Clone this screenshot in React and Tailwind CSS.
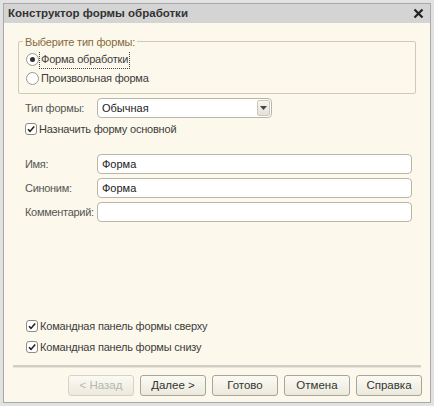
import React from "react";

const font = { fontFamily: '"Liberation Sans", Arial, sans-serif' };

function Check({ label }) {
  return (
    <div className="flex items-center gap-[2px] h-[18px]">
      <div className="w-[12px] h-[12px] border border-[#8c8c84] rounded-[3px] bg-white flex items-center justify-center">
        <svg width="10" height="10" viewBox="0 0 10 10">
          <path d="M2 5.2 L4 7.4 L8.2 2.4" fill="none" stroke="#222" strokeWidth="1.6" />
        </svg>
      </div>
      <span className="text-[11px] tracking-[-0.2px] text-[#3c3c3c]">{label}</span>
    </div>
  );
}

function Radio({ label, checked, focus }) {
  return (
    <div className="flex items-center gap-[1px] h-[19px]">
      <div className="w-[13px] h-[13px] rounded-full border border-[#9a9890] bg-white flex items-center justify-center">
        {checked && <div className="w-[5px] h-[5px] rounded-full bg-[#333]" />}
      </div>
      <span className={"text-[11px] tracking-[-0.2px] text-[#3c3c3c] px-[1px] " + (focus ? "outline outline-1 outline-dotted outline-[#444]" : "")}>{label}</span>
    </div>
  );
}

function Field({ label, value }) {
  return (
    <div className="flex items-center h-[24px]">
      <div className="w-[72px] text-[11px] tracking-[-0.3px] text-[#555]">{label}</div>
      <div className="flex-1 h-[20px] bg-white border border-[#b9b5a8] rounded-[4px] flex items-center px-[4px] text-[11px] text-[#222]">
        {value}
      </div>
    </div>
  );
}

function Btn({ children, disabled }) {
  return (
    <div
      className={
        "w-[66px] h-[21px] rounded-[3px] border flex items-center justify-center text-[11.5px] bg-[linear-gradient(#fbfaf4,#ece9dc)] " +
        (disabled ? "border-[#d6d3c6] text-[#b8b6ae]" : "border-[#a9a59a] text-[#333]")
      }
    >
      {children}
    </div>
  );
}

export default function App() {
  return (
    <div style={font} className="w-[434px] h-[406px] bg-[#e2e2e2] p-[3px]">
      <div className="w-full h-full flex flex-col border border-[#a8a8a8] bg-[#fcf9ec]">
        <div className="h-[19px] bg-[#d4d4d4] flex items-center justify-between pl-[4px] pr-[6px]">
          <span className="text-[11.5px] font-bold text-[#333]">Конструктор формы обработки</span>
          <svg width="11" height="11" viewBox="0 0 11 11">
            <path d="M1.5 1.5 L9.5 9.5 M9.5 1.5 L1.5 9.5" stroke="#222" strokeWidth="2.2" />
          </svg>
        </div>
        <div className="flex-1 flex flex-col px-[14px] pt-[18px]">
          <div className="relative border border-[#cfcab8] rounded-[2px] px-[7px] pt-[8px] pb-[5px] mb-[2px]">
            <span className="absolute -top-[8px] left-[4px] bg-[#fcf9ec] px-[2px] text-[11px] tracking-[-0.2px] text-[#86693c]">Выберите тип формы:</span>
            <Radio label="Форма обработки" checked focus />
            <Radio label="Произвольная форма" />
          </div>
          <div className="pl-[7px] pr-[4px]">
            <div className="flex items-center h-[24px]">
              <div className="w-[72px] text-[11px] tracking-[-0.2px] text-[#555]">Тип формы:</div>
              <div className="w-[175px] h-[20px] bg-white border border-[#b9b5a8] rounded-[4px] flex items-center justify-between pl-[4px] pr-[1px] text-[11px] text-[#222]">
                <span>Обычная</span>
                <div className="w-[13px] h-[16px] rounded-[2px] bg-[linear-gradient(#f6f5ef,#e4e1d6)] border border-[#ccc8ba] flex items-center justify-center">
                  <svg width="7" height="4" viewBox="0 0 7 4"><path d="M0 0 L7 0 L3.5 4 Z" fill="#444" /></svg>
                </div>
              </div>
            </div>
            <Check label="Назначить форму основной" />
            <div className="h-[14px]" />
            <Field label="Имя:" value="Форма" />
            <Field label="Синоним:" value="Форма" />
            <Field label="Комментарий:" value="" />
          </div>
          <div className="flex-1" />
          <div className="px-[8px]">
            <Check label="Командная панель формы сверху" />
            <div className="h-[3px]" />
            <Check label="Командная панель формы снизу" />
          </div>
          <div className="mt-[9px] -mx-[5px] h-[3px] bg-[#cfcdc4] border-b border-[#e8e6dc]" />
          <div className="flex justify-end gap-[6px] pt-[7px] pb-[6px] -mr-[6px]">
            <Btn disabled>&lt; Назад</Btn>
            <Btn>Далее &gt;</Btn>
            <Btn>Готово</Btn>
            <Btn>Отмена</Btn>
            <Btn>Справка</Btn>
          </div>
        </div>
      </div>
    </div>
  );
}
